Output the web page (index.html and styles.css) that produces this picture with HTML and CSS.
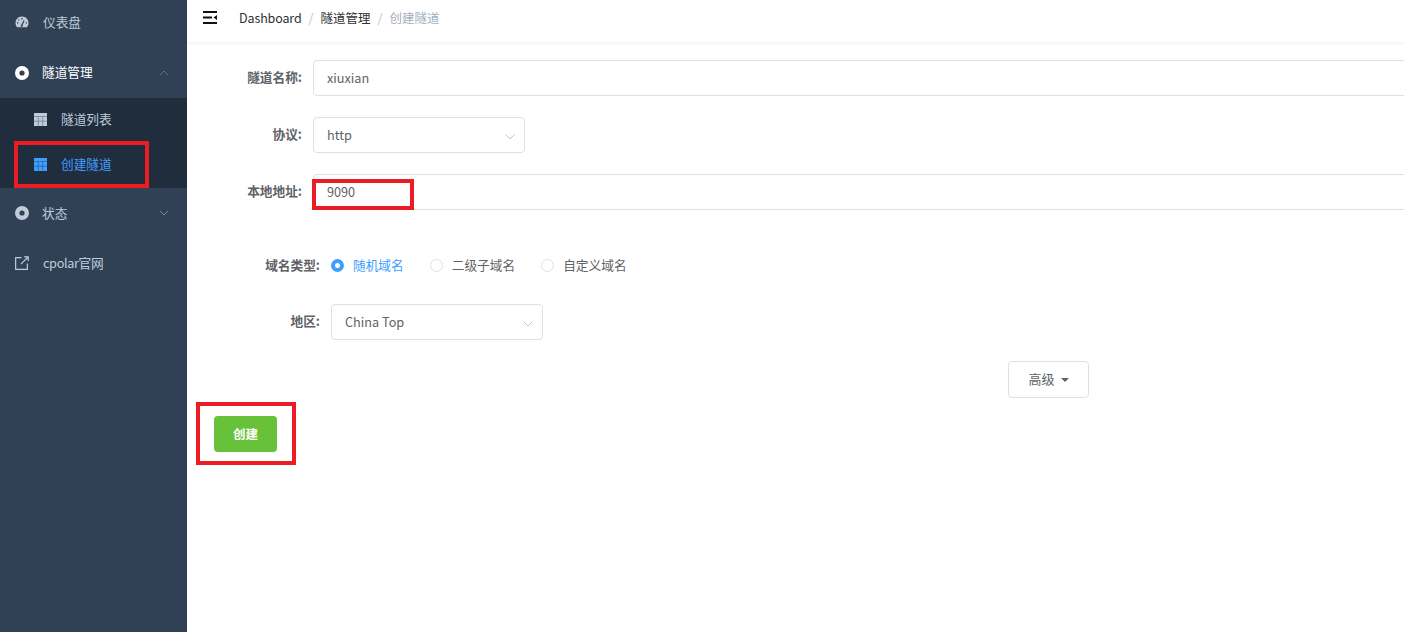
FILE: index.html
```html
<!DOCTYPE html>
<html lang="zh-CN">
<head>
<meta charset="utf-8">
<title>创建隧道</title>
<link rel="stylesheet" href="styles.css">
</head>
<body>
<div class="app">
  <aside class="sidebar">
    <div class="menu-item first">
      <svg class="icon" viewBox="0 0 14 12"><path fill="#bfcbd9" fill-rule="evenodd" d="M7 .5C3.200.5.500 3.400.500 7c0 1.700.6 3.100 1.500 4.200h10c.9-1.100 1.500-2.500 1.500-4.200C13.500 3.400 10.800.5 7 .5ZM3.300 3.300h1v1.200h-1ZM6.400 2h1.200v1.500H6.400ZM2 6.300h1.300v1.200H2Zm8.800 0H12v1.200h-1.200ZM6.200 9l2.600-5 .8.400-2 5.100a1 1 0 1 1-1.400-.5Z"/></svg>
      <span class="label">仪表盘</span>
    </div>
    <div class="menu-item open">
      <svg class="icon ring" viewBox="0 0 14 14"><circle cx="7" cy="7" r="4.800" fill="none" stroke="#fff" stroke-width="4.400"/></svg>
      <span class="label narrow">隧道管理</span>
      <svg class="chev" viewBox="0 0 10 6"><path d="M1 5l4-4 4 4" fill="none" stroke="#5f6f81" stroke-width="1"/></svg>
    </div>
    <div class="submenu">
      <div class="sub-item">
        <svg class="grid" viewBox="0 0 13 13"><path fill="#bfcbd9" d="M0 0h13v13H0z"/><path stroke="#6c7a8a" stroke-width=".7" d="M4.300 3.500V13M8.700 3.500V13M0 3.500h13M0 8.200h13"/></svg>
        <span>隧道列表</span>
      </div>
      <div class="sub-item active">
        <svg class="grid" viewBox="0 0 13 13"><path fill="#409eff" d="M0 0h13v13H0z"/><path stroke="#1f5f9f" stroke-width=".7" d="M4.300 3.500V13M8.700 3.500V13M0 3.500h13M0 8.200h13"/></svg>
        <span>创建隧道</span>
      </div>
    </div>
    <div class="menu-item">
      <svg class="icon ring" viewBox="0 0 14 14"><circle cx="7" cy="7" r="4.800" fill="none" stroke="#bfcbd9" stroke-width="4.400"/></svg>
      <span class="label narrow">状态</span>
      <svg class="chev" viewBox="0 0 10 6"><path d="M1 1l4 4 4-4" fill="none" stroke="#7c8b9c" stroke-width="1"/></svg>
    </div>
    <div class="menu-item">
      <svg class="icon" viewBox="0 0 13 13"><path fill="none" stroke="#bfcbd9" stroke-width="1.100" d="M6 1.500H.6v10.900h10.900V7M5.500 7.500 12 1.200M8.500.8h3.800v3.800"/></svg>
      <span class="label latin">cpolar官网</span>
    </div>
  </aside>

  <main class="main">
    <header class="navbar">
      <svg class="hamburger" viewBox="0 0 14 13"><path fill="#111" d="M0 0h14v2H0zM0 5.500h9v2H0zM0 11h14v2H0zM14 4v5l-3.500-2.500z"/></svg>
      <nav class="crumbs">
        <span class="root">Dashboard</span><i>/</i><span>隧道管理</span><i>/</i><span class="current">创建隧道</span>
      </nav>
    </header>

    <form class="form">
      <div class="row">
        <label class="row-label">隧道名称:</label>
        <div class="input wide">xiuxian</div>
      </div>
      <div class="row">
        <label class="row-label">协议:</label>
        <div class="input select">http
          <svg class="caret" viewBox="0 0 10 6"><path d="M.5.500 5 5 9.500.500" fill="none" stroke="#c0c4cc" stroke-width="1"/></svg>
        </div>
      </div>
      <div class="row">
        <label class="row-label">本地地址:</label>
        <div class="input wide">9090</div>
      </div>

      <div class="group">
        <div class="row radios-row">
          <label class="row-label">域名类型:</label>
          <div class="radios">
            <span class="radio on"><b></b><em>随机域名</em></span>
            <span class="radio"><b></b><em>二级子域名</em></span>
            <span class="radio"><b></b><em>自定义域名</em></span>
          </div>
        </div>
        <div class="row">
          <label class="row-label">地区:</label>
          <div class="input select">China Top
            <svg class="caret" viewBox="0 0 10 6"><path d="M.5.500 5 5 9.500.500" fill="none" stroke="#c0c4cc" stroke-width="1"/></svg>
          </div>
        </div>
      </div>

      <div class="advanced-row">
        <button type="button" class="btn-advanced">高级<span class="tri"></span></button>
      </div>
      <button type="button" class="btn-create">创建</button>
    </form>
  </main>

  <div class="mark mark-menu"></div>
  <div class="mark mark-input"></div>
  <div class="mark mark-create"></div>
</div>
</body>
</html>
```

FILE: styles.css
```css
* { box-sizing: border-box; }
html, body { margin: 0; height: 100%; overflow: hidden; }
body {
  font-family: "Noto Sans CJK SC", "Noto Sans", sans-serif;
  font-size: 12.7px;
  color: #606266;
  background: #fff;
}
.app { position: relative; display: flex; height: 632px; overflow: hidden; }

/* sidebar */
.sidebar { flex: 0 0 187px; background: #304156; color: #bfcbd9; }
.menu-item { display: flex; align-items: center; height: 50px; padding-left: 15px; position: relative; }
.menu-item.first { height: 47px; padding-bottom: 3px; }
.menu-item.open { height: 51px; color: #fff; }
.icon { width: 14px; height: 14px; flex: none; }
.label { margin-left: 14px; margin-bottom: 2px; }
.label.narrow { margin-left: 13px; }
.label.latin { letter-spacing: -.35px; }
.chev { position: absolute; right: 18px; top: 50%; width: 10px; height: 6px; margin-top: -3px; }
.submenu { background: #1f2d3d; }
.sub-item { display: flex; align-items: center; height: 45px; padding-left: 34px; padding-bottom: 2px; }
.sub-item span { margin-bottom: 2px; }
.grid { width: 13px; height: 13px; flex: none; margin-right: 14px; }
.sub-item.active { color: #409eff; }

/* main */
.main { flex: 1 1 auto; min-width: 0; }
.navbar { display: flex; align-items: center; height: 42px; padding: 0 0 7px 16px; box-shadow: 0 1px 4px rgba(0, 21, 41, .08); }
.hamburger { width: 14px; height: 13px; flex: none; margin-right: 22px; }
.crumbs { font-size: 12.5px; color: #303133; display: flex; align-items: center; }
.crumbs .root { letter-spacing: -.12px; }
.crumbs i { font-style: normal; color: #c0c4cc; margin: 0 7px; }
.crumbs .current { color: #a3afc0; }

/* form */
.form { padding-top: 18px; }
.row { display: flex; align-items: center; margin-bottom: 21px; }
.row-label { width: 115px; text-align: right; margin-right: 11px; margin-bottom: 4px; font-size: 12.7px; font-weight: 700; color: #606266; flex: none; }
.input { display: flex; align-items: center; height: 36px; padding: 0 13px 2px; border: 1px solid #dcdfe6; border-radius: 4px; background: #fff; position: relative; }
.input.wide { width: 1200px; flex: none; }
.input.select { width: 212px; flex: none; }
.caret { position: absolute; right: 9px; top: 16px; width: 10px; height: 6px; }

.group { padding-top: 14px; }
.group .row-label { width: 133px; }
.group .row { margin-bottom: 0; }
.radios-row { height: 59px; padding-bottom: 18px; }
.radios-row .row-label { margin-bottom: 2px; }
.radios { display: flex; align-items: center; }
.radio { display: flex; align-items: center; margin-right: 26px; }
.radio em { font-style: normal; margin-bottom: 2px; }
.radio b { width: 13px; height: 13px; border: 1px solid #dcdfe6; border-radius: 50%; margin-right: 9px; background: #fff; }
.radio.on { color: #409eff; }
.radio.on b { background: #fff; border: 4px solid #409eff; }

.advanced-row { padding: 21px 0 0 821px; }
.btn-advanced { display: flex; align-items: center; justify-content: center; width: 81px; height: 37px; padding: 0 0 2px; border: 1px solid #dcdfe6; border-radius: 4px; background: #fff; color: #606266; font: inherit; font-size: 13px; }
.tri { width: 0; height: 0; margin: 2px 0 0 6px; border: 4px solid transparent; border-top: 4px solid #606266; border-bottom: 0; }
.btn-create { display: block; margin: 18px 0 0 27px; width: 63px; height: 36px; padding: 0 0 2px; border: 0; border-radius: 4px; background: #67c23a; color: #fff; font: inherit; font-size: 12.5px; font-weight: 700; }

/* red annotation frames drawn over the screenshot */
.mark { position: absolute; border: 4px solid #ec1c24; pointer-events: none; }
.mark-menu { left: 14px; top: 141px; width: 135px; height: 47px; }
.mark-input { left: 312px; top: 179px; width: 102px; height: 31px; }
.mark-create { left: 196px; top: 402px; width: 100px; height: 63px; }
```
